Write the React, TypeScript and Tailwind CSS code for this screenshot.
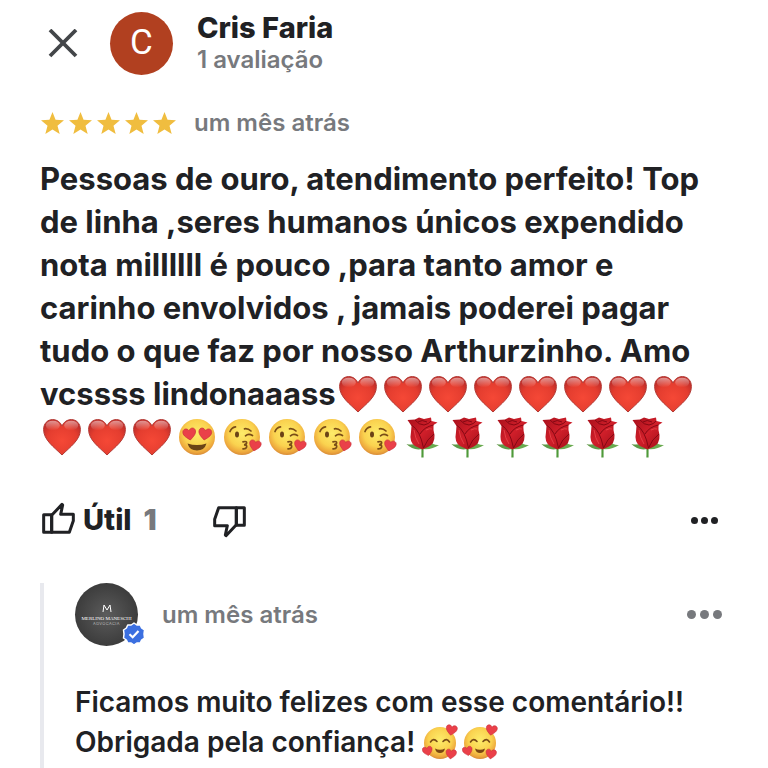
import type { ReactNode } from "react";

const emojiDefs = (
  <svg width="0" height="0" className="absolute" aria-hidden="true">
    <defs>
      <radialGradient id="heartFill" cx="50%" cy="60%" r="60%">
        <stop offset="0%" stopColor="#f54836" />
        <stop offset="70%" stopColor="#e43d2f" />
        <stop offset="100%" stopColor="#c42f2a" />
      </radialGradient>
      <linearGradient id="heartShine" x1="0" y1="0" x2="0" y2="1">
        <stop offset="0%" stopColor="#ffffff" stopOpacity="0.5" />
        <stop offset="100%" stopColor="#ffffff" stopOpacity="0" />
      </linearGradient>
      <radialGradient id="faceFill" cx="50%" cy="40%" r="60%">
        <stop offset="0%" stopColor="#fdec6a" />
        <stop offset="60%" stopColor="#fad24f" />
        <stop offset="88%" stopColor="#eda73c" />
        <stop offset="100%" stopColor="#d88c38" />
      </radialGradient>
      <linearGradient id="roseFill" x1="0" y1="0" x2="1" y2="1">
        <stop offset="0%" stopColor="#a8101c" />
        <stop offset="50%" stopColor="#d01f2a" />
        <stop offset="100%" stopColor="#a00e18" />
      </linearGradient>
      <path
        id="smallHeart"
        d="M0 5.5C-3 3-5.8 1-5.8-2C-5.8-5.4-1.6-6.2 0-3C1.6-6.2 5.8-5.4 5.8-2C5.8 1 3 3 0 5.5Z"
        fill="#ea4049"
        stroke="#c92f3a"
        strokeWidth="0.6"
      />
    </defs>
  </svg>
);

const Emoji = ({ label, children }: { label: string; children: ReactNode }) => (
  <svg
    role="img"
    aria-label={label}
    viewBox="0 0 45 42"
    className="inline-block h-[42px] w-[45px] align-[-10px]"
  >
    {children}
  </svg>
);

const Heart = () => (
  <Emoji label="❤️">
    <path
      d="M22 39C14 31 3.6 24 3.6 13.5C3.6 7.5 7.6 3.6 12.6 3.6C17 3.6 20.4 6.2 22 10C23.6 6.2 27 3.6 31.4 3.6C36.4 3.6 40.4 7.5 40.4 13.5C40.4 24 30 31 22 39Z"
      fill="url(#heartFill)"
      stroke="#b23a35"
      strokeWidth="1"
    />
    <ellipse cx="12.8" cy="9.5" rx="7" ry="4.8" fill="url(#heartShine)" />
    <ellipse cx="31.2" cy="9.5" rx="7" ry="4.8" fill="url(#heartShine)" />
  </Emoji>
);

const HeartEyes = () => (
  <Emoji label="😍">
    <circle cx="22" cy="21" r="18" fill="url(#faceFill)" />
    <use href="#smallHeart" transform="translate(14.5 18) rotate(-8) scale(1.1)" />
    <use href="#smallHeart" transform="translate(30 18) rotate(8) scale(1.1)" />
    <path d="M12.5 27.5Q22 30.5 31.5 27.5Q29.5 34.5 22 34.5Q14.5 34.5 12.5 27.5Z" fill="#6b4316" />
  </Emoji>
);

const Kiss = () => (
  <Emoji label="😘">
    <circle cx="22" cy="21" r="18" fill="url(#faceFill)" />
    <ellipse cx="17" cy="18.5" rx="2" ry="3" fill="#6b4316" />
    <g fill="none" stroke="#7a4d17" strokeWidth="1.7" strokeLinecap="round">
      <path d="M10 15.5Q11.5 11.5 15.5 10.8" />
      <path d="M24.5 12.8Q28 12.2 31 15" />
      <path d="M25.5 19.8Q28.5 17.2 32.5 19.5" />
      <path d="M23 25.8Q27.5 24.8 26.5 27.5Q25.9 28.6 24 28.8Q27.5 28.8 26.5 31.4Q25.9 33 23 32.8" />
    </g>
    <use href="#smallHeart" transform="translate(35 29.5) rotate(12)" />
  </Emoji>
);

const Rose = () => (
  <Emoji label="🌹">
    <path d="M21.5 30L23.5 30L23.6 41.5L21.4 41.5Z" fill="#4f9a3a" />
    <path d="M22.5 33Q13 35 6.5 28Q13 29.5 16 27Z" fill="#5e9b48" />
    <path d="M22.5 33Q32 34 39 29Q33 29.5 30 25Z" fill="#6aab50" />
    <path
      d="M7.5 4L15 3.5L19 1.5L24 3L31 1.5L31.5 5L37.5 6.5L33.5 9Q33 14 34.5 19Q35 28 28 31L22.5 33.5L15 30Q9 26 11 16L11.5 10Z"
      fill="url(#roseFill)"
    />
    <path
      d="M11.5 9Q20 14 23.5 32M33.5 9Q24 11 20 18M15 4Q19 9 24 9Q29 8 31 5M34 18Q27 23 23.5 32M18 6Q22 3 27 6"
      fill="none"
      stroke="#850813"
      strokeWidth="1"
    />
    <path d="M14 14Q15 22 19 28M26 14Q30 12 32 13" fill="none" stroke="#e8444a" strokeWidth="0.9" />
  </Emoji>
);

const LoveFace = () => (
  <svg
    role="img"
    aria-label="🥰"
    viewBox="0 0 40 38"
    className="inline-block h-[38px] w-10 align-[-9px]"
  >
    <circle cx="18" cy="20" r="16" fill="url(#faceFill)" />
    <g fill="none" stroke="#7a4d17" strokeWidth="1.6" strokeLinecap="round">
      <path d="M8.5 19Q11.5 14.5 15 18.5" />
      <path d="M21 18.5Q24.5 14.5 27.5 19" />
    </g>
    <path d="M13 25.5Q18 28 23 25.5Q22 30 18 30Q14 30 13 25.5Z" fill="#7a4512" />
    <use href="#smallHeart" transform="translate(29.5 7) rotate(10) scale(0.95)" />
    <use href="#smallHeart" transform="translate(5.5 28) rotate(-12) scale(0.85)" />
    <use href="#smallHeart" transform="translate(29 31) rotate(8) scale(0.9)" />
  </svg>
);

const Star = () => (
  <svg viewBox="0 0 24 24" className="h-[23px] w-[23px] fill-[#f0bd3f]" aria-hidden="true">
    <path d="M12 0L15.2 8.2L24 8.7L17.2 14.3L19.5 23L12 18.3L4.5 23L6.8 14.3L0 8.7L8.8 8.2Z" />
  </svg>
);

const ThumbIcon = ({ className }: { className: string }) => (
  <svg
    viewBox="0 0 99 96"
    className={className}
    fill="none"
    stroke="currentColor"
    strokeWidth="9"
    strokeLinejoin="round"
    aria-hidden="true"
  >
    <path d="M5 38H29V91H5Z" />
    <path d="M29 40L60 7L62 9L56 37H94V56L82 91H29Z" />
  </svg>
);

const App = () => {
  const hearts = Array.from({ length: 11 });
  const kisses = Array.from({ length: 4 });
  const roses = Array.from({ length: 6 });

  return (
    <main className="flex min-h-screen flex-col bg-white pt-3 pl-10 font-['Inter',sans-serif] text-[#202124]">
      {emojiDefs}

      <header className="flex h-[63px] items-center">
        <button type="button" aria-label="Fechar" className="ml-2 text-[#434649]">
          <svg viewBox="0 0 30 30" className="h-[30px] w-[30px]" stroke="currentColor" strokeWidth="3.8">
            <path d="M2 1L28 27M28 1L2 27" />
          </svg>
        </button>
        <div className="ml-8 flex h-[63px] w-[63px] shrink-0 items-center justify-center rounded-full bg-[#b14020] font-['Roboto',sans-serif] text-[35px] text-white">
          C
        </div>
        <div className="ml-6">
          <h1 className="text-[29px] leading-8 font-extrabold">Cris Faria</h1>
          <p className="text-[24px] leading-8 font-semibold text-[#77797d]">1 avaliação</p>
        </div>
      </header>

      <div className="mt-8 flex h-8 items-center">
        <div className="ml-px flex gap-[5px]" role="img" aria-label="5 estrelas">
          <Star />
          <Star />
          <Star />
          <Star />
          <Star />
        </div>
        <span className="ml-[18px] text-[24px] font-semibold text-[#77797d]">um mês atrás</span>
      </div>

      <p className="mt-[18px] pr-10 text-[31px] leading-[43px] font-bold">
        Pessoas de ouro, atendimento perfeito! Top de linha ,seres humanos únicos expendido nota
        millllll é pouco ,para tanto amor e carinho envolvidos , jamais poderei pagar tudo o que faz
        por nosso Arthurzinho. Amo vcssss lindonaaass
        {hearts.map((_, i) => (
          <Heart key={i} />
        ))}
        <HeartEyes />
        {kisses.map((_, i) => (
          <Kiss key={i} />
        ))}
        {roses.map((_, i) => (
          <Rose key={i} />
        ))}
      </p>

      <div className="mt-[42px] flex h-10 items-center pr-[50px]">
        <button type="button" className="flex items-center text-[29px] font-extrabold">
          <ThumbIcon className="mr-2 mb-1 ml-0.5 h-8 w-[33px]" />
          Útil
          <span className="ml-3 font-black text-[#77797d]">1</span>
        </button>
        <button type="button" aria-label="Não útil" className="mt-1 ml-14">
          <ThumbIcon className="h-8 w-[33px] rotate-180" />
        </button>
        <button type="button" aria-label="Mais opções" className="ml-auto flex gap-[3px]">
          <span className="h-[7px] w-[7px] rounded-full bg-[#202124]" />
          <span className="h-[7px] w-[7px] rounded-full bg-[#202124]" />
          <span className="h-[7px] w-[7px] rounded-full bg-[#202124]" />
        </button>
      </div>

      <section className="mt-[43px] grow border-l-4 border-[#e8e9ee] pl-[31px]">
        <div className="flex items-center pr-[46px]">
          <div className="relative flex h-[63px] w-[63px] flex-col items-center justify-center rounded-full bg-radial from-[#5c5c5c] to-[#303030] text-white">
            <svg viewBox="0 0 10 8" className="mb-1 h-2 w-[10px]" fill="none" stroke="currentColor" aria-hidden="true">
              <path d="M1 8L2 1L5 6L8 1L9 8" />
            </svg>
            <span className="font-['Liberation_Serif',serif] text-[5px] leading-[5px] whitespace-nowrap">
              MERLINO MANESCHI
            </span>
            <span className="text-[4px] leading-[5px] tracking-widest text-[#b5b5b5]">ADVOCACIA</span>
            <svg viewBox="0 0 24 24" className="absolute -right-2 bottom-0 h-6 w-6" role="img" aria-label="Verificado">
              <path
                d="M12 1L14.8 3L18.3 3L19.6 6L22.5 8L22 12L22.5 16L19.6 18L18.3 21L14.8 21L12 23L9.2 21L5.7 21L4.4 18L1.5 16L2 12L1.5 8L4.4 6L5.7 3L9.2 3Z"
                fill="#3b6fe0"
                stroke="#ffffff"
                strokeWidth="1.5"
                strokeLinejoin="round"
              />
              <path d="M7.5 12.3L10.7 15.3L16.5 9" fill="none" stroke="#ffffff" strokeWidth="2.2" />
            </svg>
          </div>
          <span className="ml-6 text-[24px] font-semibold text-[#77797d]">um mês atrás</span>
          <button type="button" aria-label="Mais opções da resposta" className="ml-auto flex gap-1">
            <span className="h-[9px] w-[9px] rounded-full bg-[#77797d]" />
            <span className="h-[9px] w-[9px] rounded-full bg-[#77797d]" />
            <span className="h-[9px] w-[9px] rounded-full bg-[#77797d]" />
          </button>
        </div>
        <p className="mt-9 pr-10 text-[28px] leading-10 font-semibold">
          Ficamos muito felizes com esse comentário!! Obrigada pela confiança! <LoveFace />
          <LoveFace />
        </p>
      </section>
    </main>
  );
};

export default App;
